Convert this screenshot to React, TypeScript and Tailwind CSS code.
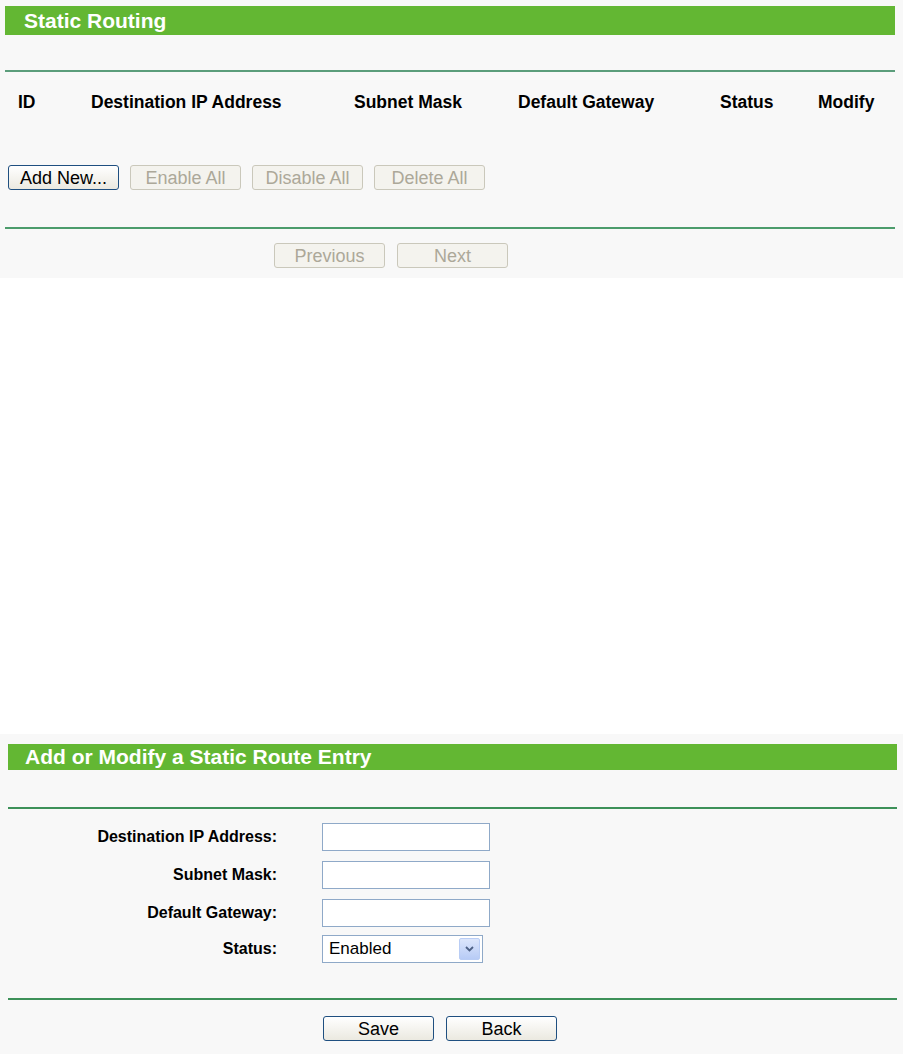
const green = 'bg-[#63b733]';

function XpButton({ label, disabled, className = '' }: { label: string; disabled?: boolean; className?: string }) {
    return (
        <button
            type="button"
            disabled={disabled}
            className={[
                'flex h-[25px] w-[111px] items-center justify-center rounded-[3px] border text-[18px] leading-none',
                disabled
                    ? 'border-[#cac8bb] bg-[#f4f3ee] text-[#aca899]'
                    : 'border-[#1f4f80] bg-gradient-to-b from-white to-[#ebe9e0] text-black',
                className,
            ].join(' ')}
        >
            {label}
        </button>
    );
}

function FormRow({ label, children }: { label: string; children: React.ReactNode }) {
    return (
        <div className="flex h-[28px] items-center">
            <span className="w-[277px] text-right text-[16px] font-bold text-black">{label}</span>
            <div className="ml-[45px]">{children}</div>
        </div>
    );
}

function TextBox() {
    return <input className="block h-[28px] w-[168px] border border-[#8fa9c8] bg-white px-1 text-[16px] outline-none" />;
}

export default function App() {
    return (
        <div className="min-h-[1054px] w-[903px] bg-white font-['Liberation_Sans',Arial,sans-serif]">
            {/* list panel */}
            <div className="h-[278px] bg-[#f8f8f8] pt-[6px]">
                <div className={`ml-[5px] mr-[8px] h-[29px] ${green} pl-[19px] text-[21px] font-bold leading-[29px] text-white`}>
                    Static Routing
                </div>
                <div className="ml-[5px] mr-[8px] mt-[35px] h-[2px] bg-[#5b9d7b]" />
                <div className="flex h-[60px] items-center pl-[18px] text-[17.5px] font-bold text-black">
                    <span className="w-[73px]">ID</span>
                    <span className="w-[263px]">Destination IP Address</span>
                    <span className="w-[164px]">Subnet Mask</span>
                    <span className="w-[202px]">Default Gateway</span>
                    <span className="w-[98px]">Status</span>
                    <span>Modify</span>
                </div>
                <div className="mt-[33px] flex gap-[11px] pl-[8px]">
                    <XpButton label="Add New..." />
                    <XpButton label="Enable All" disabled />
                    <XpButton label="Disable All" disabled />
                    <XpButton label="Delete All" disabled />
                </div>
                <div className="ml-[5px] mr-[8px] mt-[37px] h-[2px] bg-[#4c9c6c]" />
                <div className="mt-[14px] flex gap-[12px] pl-[274px]">
                    <XpButton label="Previous" disabled />
                    <XpButton label="Next" disabled />
                </div>
            </div>

            <div className="h-[456px]" />

            {/* edit panel */}
            <div className="bg-[#f8f8f8] pb-[13px] pt-[10px]">
                <div className={`ml-[8px] mr-[6px] h-[26px] ${green} pl-[17px] text-[21px] font-bold leading-[26px] text-white`}>
                    Add or Modify a Static Route Entry
                </div>
                <div className="ml-[8px] mr-[6px] mt-[37px] h-[2px] bg-[#3d9159]" />
                <div className="mt-[14px] flex flex-col gap-[10px]">
                    <FormRow label="Destination IP Address:"><TextBox /></FormRow>
                    <FormRow label="Subnet Mask:"><TextBox /></FormRow>
                    <FormRow label="Default Gateway:"><TextBox /></FormRow>
                    <div className="-mt-[2px]">
                        <FormRow label="Status:">
                            <div className="relative flex h-[28px] w-[161px] items-center border border-[#8fa9c8] bg-white pl-[6px] text-[17px] text-black">
                                Enabled
                                <span className="absolute right-[2px] top-[2px] flex h-[22px] w-[21px] items-center justify-center rounded-[2px] border border-[#b9cdf5] bg-gradient-to-b from-[#dce6fb] to-[#b7cbf6]">
                                    <svg width="9" height="6" viewBox="0 0 9 6">
                                        <path d="M1 1 L4.5 4.5 L8 1" fill="none" stroke="#4d6185" strokeWidth="1.8" />
                                    </svg>
                                </span>
                            </div>
                        </FormRow>
                    </div>
                </div>
                <div className="ml-[8px] mr-[6px] mt-[35px] h-[2px] bg-[#3d9159]" />
                <div className="mt-[16px] flex gap-[12px] pl-[323px]">
                    <XpButton label="Save" />
                    <XpButton label="Back" />
                </div>
            </div>
        </div>
    );
}
